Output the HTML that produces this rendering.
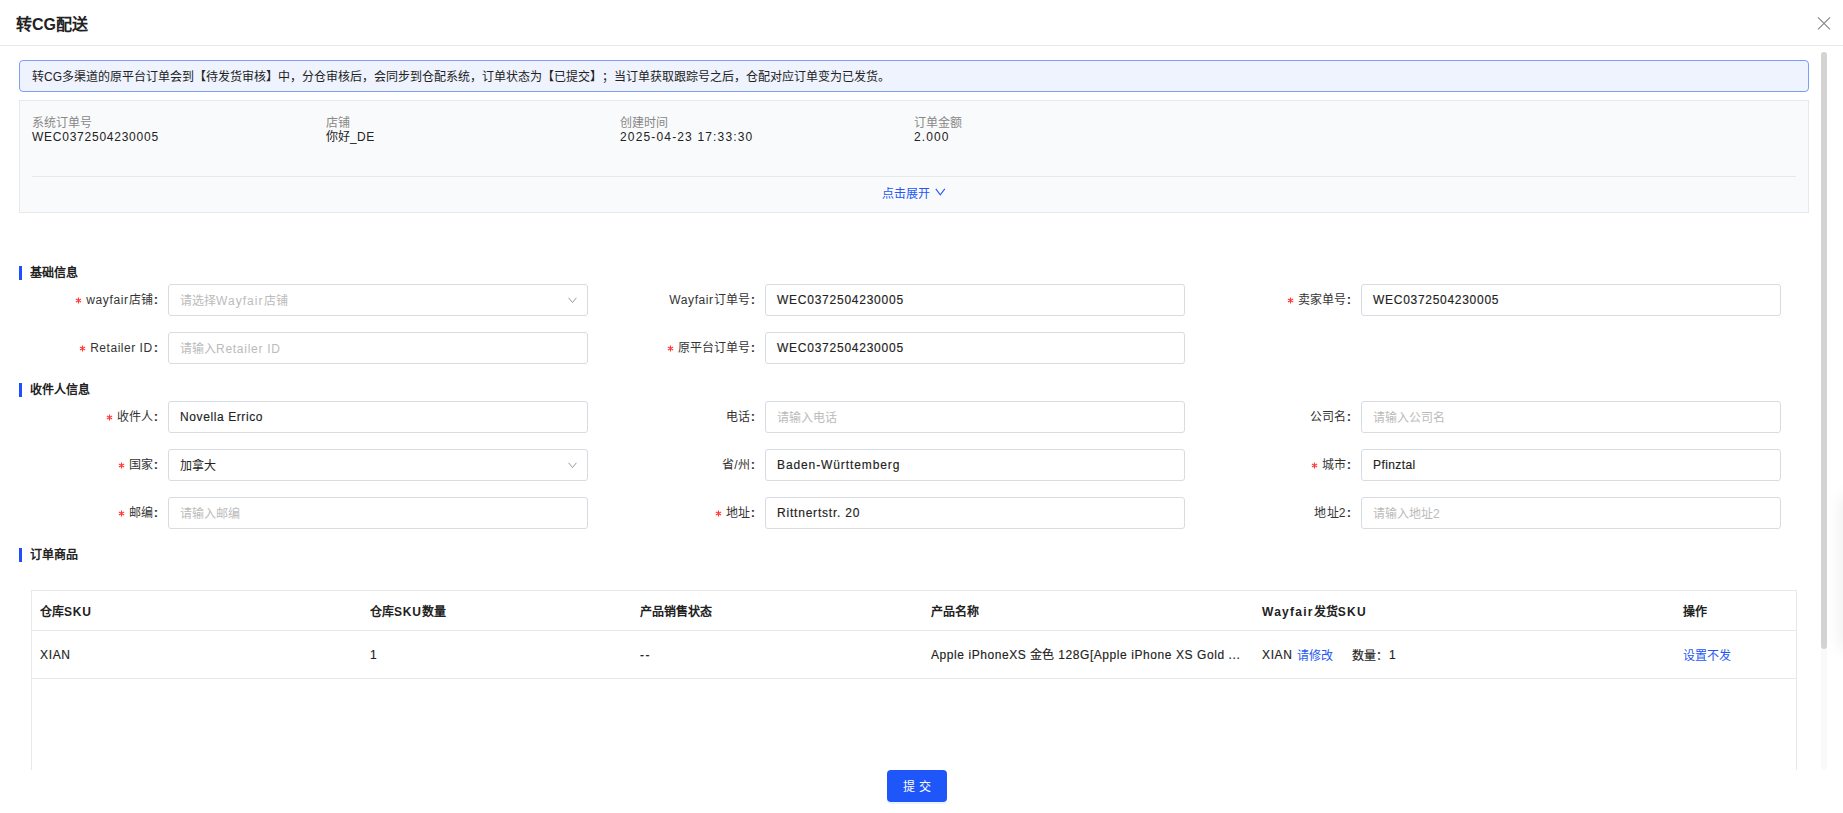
<!DOCTYPE html>
<html lang="zh-CN"><head><meta charset="utf-8">
<style>
*{box-sizing:border-box;margin:0;padding:0}
html,body{width:1843px;height:813px;overflow:hidden;background:#fff}
body{text-spacing-trim:space-all;font-feature-settings:normal;font-family:"Liberation Sans",sans-serif;font-size:12px;color:#222;position:relative}
.a{position:absolute;white-space:nowrap}
.title{left:16px;top:14px;font-size:16px;font-weight:bold;color:#222;line-height:22px}
.hdr-line{left:0;top:45px;width:1843px;height:1px;background:#e8e8e8}
.close{left:1817px;top:16px;width:14px;height:14px}
.alert{left:19px;top:60px;width:1790px;height:32px;border:1px solid #7b9ef7;background:#eef3fe;border-radius:4px;padding-left:12px;line-height:32px;color:#222}
.info{left:19px;top:100px;width:1790px;height:113px;border:1px solid #e6e8eb;background:#f9fafb}
.lbl{color:#888;line-height:14px}
.val{color:#222;line-height:14px}
.divl{left:32px;top:176px;width:1764px;height:1px;background:#e6e8eb}
.expand{left:882px;top:187px;color:#2457f5;line-height:14px}
.exchev{position:absolute;left:53px;top:0.5px}
.sec{font-weight:bold;color:#222;line-height:14px}
.bar{width:3px;height:14px;background:#1e50ff}
.flabel{line-height:14px;color:#333;text-align:right}
.req{display:inline-block;vertical-align:0px;margin-right:4px}
.inp{width:420px;height:32px;border:1px solid #d7dbe2;border-radius:3px;background:#fff;padding-left:11px;line-height:30px;color:#222}
.ph{color:#bbb;line-height:32px}
.cj{position:relative;top:1px}
.chev{position:absolute;right:10px;top:12px;width:9px;height:7px}
.tbl{left:31px;top:590px;width:1766px;height:180px;border-left:1px solid #e6e8ec;border-right:1px solid #e6e8ec;border-top:1px solid #e6e8ec}
.th{font-weight:bold;color:#222;line-height:14px}
.td{color:#222;line-height:14px}
.link{color:#2457f5}
.rowline{height:1px;background:#e6e8ec}
.btn{left:887px;top:770px;width:60px;height:32px;background:#1f56fa;border-radius:4px;color:#fff;text-align:center;line-height:35px;letter-spacing:4px;text-indent:4px;box-shadow:0 2px 0 rgba(5,145,255,0.1)}
.sb{left:1821px;top:52px;width:6px;height:597px;background:#d3d3d3;border-radius:3px}
.sbt{left:1821px;top:52px;width:6px;height:718px;background:#f9f9f9;border-radius:3px}
.co{margin-left:1px;font-weight:bold;font-size:13px}
.shd{left:1845px;top:500px;width:10px;height:145px;box-shadow:0 0 16px 4px rgba(0,0,0,0.07)}
span[id^="v"],span[id^="td"]{-webkit-text-stroke:0.15px currentColor}
.ph span{-webkit-text-stroke:0}

</style></head><body>
<div class="a title">转CG配送</div>
<div class="a hdr-line"></div>
<svg class="a close" viewBox="0 0 14 14"><path d="M1 1.4L13 13.4M13 1.4L1 13.4" stroke="#8a8a8a" stroke-width="1.2"/></svg>
<div class="a sbt"></div><div class="a sb"></div><div class="a shd"></div>
<div class="a alert">转CG多渠道的原平台订单会到【待发货审核】中，分仓审核后，会同步到仓配系统，订单状态为【已提交】；当订单获取跟踪号之后，仓配对应订单变为已发货。</div>
<div class="a info"></div>
<div class="a lbl" style="left:32px;top:116px">系统订单号</div>
<div class="a val" style="left:32px;top:130px"><span id="iw1"><span id="iv1" style="letter-spacing:0.753px">WEC0372504230005</span></span></div>
<div class="a lbl" style="left:326px;top:116px">店铺</div>
<div class="a val" style="left:326px;top:130px"><span id="iw2">你好<span id="iv2" style="letter-spacing:0.450px">_DE</span></span></div>
<div class="a lbl" style="left:620px;top:116px">创建时间</div>
<div class="a val" style="left:620px;top:130px"><span id="iw3"><span id="iv3" style="letter-spacing:1.156px">2025-04-23 17:33:30</span></span></div>
<div class="a lbl" style="left:914px;top:116px">订单金额</div>
<div class="a val" style="left:914px;top:130px"><span id="iw4"><span id="iv4" style="letter-spacing:1.075px">2.000</span></span></div>
<div class="a divl"></div>
<div class="a expand">点击展开<svg class="exchev" width="11" height="8" viewBox="0 0 11 8"><path d="M0.8 0.8L5.3 6.8L9.8 0.8" fill="none" stroke="#2457f5" stroke-width="1.1"/></svg></div>
<div class="a bar" style="left:19px;top:266px"></div>
<div class="a sec" style="left:30px;top:266px">基础信息</div>
<div class="a flabel" style="right:1685px;top:293px"><svg class="req" width="7" height="7" viewBox="0 0 7 7"><path d="M3.5 0.4V6.6M0.9 2L6.1 5M0.9 5L6.1 2" stroke="#ff3a3a" stroke-width="1.15"/><circle cx="3.5" cy="3.5" r="0.9" fill="#ff3a3a"/></svg><span id="fl1"><span id="lb1" style="letter-spacing:0.643px">wayfair</span>店铺<span class="co">:</span></span></div>
<div class="a inp ph" style="left:168px;top:284px"><span id="fv1">请选择<span id="ph1" style="letter-spacing:1.043px">Wayfair</span>店铺</span><svg class="chev" width="9" height="7" viewBox="0 0 9 7"><path d="M0.6 0.8L4.5 5.6L8.4 0.8" fill="none" stroke="#999" stroke-width="1"/></svg></div>
<div class="a flabel" style="right:1088px;top:293px"><span id="fl2"><span id="lb2" style="letter-spacing:0.586px">Wayfair</span>订单号<span class="co">:</span></span></div>
<div class="a inp" style="left:765px;top:284px"><span id="fv2"><span id="v2" style="letter-spacing:0.753px">WEC0372504230005</span></span></div>
<div class="a flabel" style="right:492px;top:293px"><svg class="req" width="7" height="7" viewBox="0 0 7 7"><path d="M3.5 0.4V6.6M0.9 2L6.1 5M0.9 5L6.1 2" stroke="#ff3a3a" stroke-width="1.15"/><circle cx="3.5" cy="3.5" r="0.9" fill="#ff3a3a"/></svg><span id="fl3">卖家单号<span class="co">:</span></span></div>
<div class="a inp" style="left:1361px;top:284px"><span id="fv3"><span id="v3" style="letter-spacing:0.713px">WEC0372504230005</span></span></div>
<div class="a flabel" style="right:1685px;top:341px"><svg class="req" width="7" height="7" viewBox="0 0 7 7"><path d="M3.5 0.4V6.6M0.9 2L6.1 5M0.9 5L6.1 2" stroke="#ff3a3a" stroke-width="1.15"/><circle cx="3.5" cy="3.5" r="0.9" fill="#ff3a3a"/></svg><span id="fl4"><span id="lb4" style="letter-spacing:0.527px">Retailer ID</span><span class="co">:</span></span></div>
<div class="a inp ph" style="left:168px;top:332px"><span id="fv4">请输入<span id="ph4" style="letter-spacing:0.730px">Retailer ID</span></span></div>
<div class="a flabel" style="right:1088px;top:341px"><svg class="req" width="7" height="7" viewBox="0 0 7 7"><path d="M3.5 0.4V6.6M0.9 2L6.1 5M0.9 5L6.1 2" stroke="#ff3a3a" stroke-width="1.15"/><circle cx="3.5" cy="3.5" r="0.9" fill="#ff3a3a"/></svg><span id="fl5">原平台订单号<span class="co">:</span></span></div>
<div class="a inp" style="left:765px;top:332px"><span id="fv5"><span id="v5" style="letter-spacing:0.753px">WEC0372504230005</span></span></div>
<div class="a bar" style="left:19px;top:383px"></div>
<div class="a sec" style="left:30px;top:383px">收件人信息</div>
<div class="a flabel" style="right:1685px;top:410px"><svg class="req" width="7" height="7" viewBox="0 0 7 7"><path d="M3.5 0.4V6.6M0.9 2L6.1 5M0.9 5L6.1 2" stroke="#ff3a3a" stroke-width="1.15"/><circle cx="3.5" cy="3.5" r="0.9" fill="#ff3a3a"/></svg><span id="fl6">收件人<span class="co">:</span></span></div>
<div class="a inp" style="left:168px;top:401px"><span id="fv6"><span id="v6" style="letter-spacing:0.600px">Novella Errico</span></span></div>
<div class="a flabel" style="right:1088px;top:410px"><span >电话<span class="co">:</span></span></div>
<div class="a inp ph" style="left:765px;top:401px"><span >请输入电话</span></div>
<div class="a flabel" style="right:492px;top:410px"><span >公司名<span class="co">:</span></span></div>
<div class="a inp ph" style="left:1361px;top:401px"><span >请输入公司名</span></div>
<div class="a flabel" style="right:1685px;top:458px"><svg class="req" width="7" height="7" viewBox="0 0 7 7"><path d="M3.5 0.4V6.6M0.9 2L6.1 5M0.9 5L6.1 2" stroke="#ff3a3a" stroke-width="1.15"/><circle cx="3.5" cy="3.5" r="0.9" fill="#ff3a3a"/></svg><span id="fl9">国家<span class="co">:</span></span></div>
<div class="a inp" style="left:168px;top:449px"><span ><span class="cj">加拿大</span></span><svg class="chev" width="9" height="7" viewBox="0 0 9 7"><path d="M0.6 0.8L4.5 5.6L8.4 0.8" fill="none" stroke="#999" stroke-width="1"/></svg></div>
<div class="a flabel" style="right:1088px;top:458px"><span id="fl10">省/州<span class="co">:</span></span></div>
<div class="a inp" style="left:765px;top:449px"><span id="fv10"><span id="v10" style="letter-spacing:0.894px">Baden-Württemberg</span></span></div>
<div class="a flabel" style="right:492px;top:458px"><svg class="req" width="7" height="7" viewBox="0 0 7 7"><path d="M3.5 0.4V6.6M0.9 2L6.1 5M0.9 5L6.1 2" stroke="#ff3a3a" stroke-width="1.15"/><circle cx="3.5" cy="3.5" r="0.9" fill="#ff3a3a"/></svg><span >城市<span class="co">:</span></span></div>
<div class="a inp" style="left:1361px;top:449px"><span id="fv11"><span id="v11" style="letter-spacing:0.414px">Pfinztal</span></span></div>
<div class="a flabel" style="right:1685px;top:506px"><svg class="req" width="7" height="7" viewBox="0 0 7 7"><path d="M3.5 0.4V6.6M0.9 2L6.1 5M0.9 5L6.1 2" stroke="#ff3a3a" stroke-width="1.15"/><circle cx="3.5" cy="3.5" r="0.9" fill="#ff3a3a"/></svg><span >邮编<span class="co">:</span></span></div>
<div class="a inp ph" style="left:168px;top:497px"><span >请输入邮编</span></div>
<div class="a flabel" style="right:1088px;top:506px"><svg class="req" width="7" height="7" viewBox="0 0 7 7"><path d="M3.5 0.4V6.6M0.9 2L6.1 5M0.9 5L6.1 2" stroke="#ff3a3a" stroke-width="1.15"/><circle cx="3.5" cy="3.5" r="0.9" fill="#ff3a3a"/></svg><span >地址<span class="co">:</span></span></div>
<div class="a inp" style="left:765px;top:497px"><span id="fv13"><span id="v13" style="letter-spacing:0.793px">Rittnertstr. 20</span></span></div>
<div class="a flabel" style="right:492px;top:506px"><span id="fl14"><span id="lb14" style="letter-spacing:0.200px">地址2</span><span class="co">:</span></span></div>
<div class="a inp ph" style="left:1361px;top:497px"><span >请输入地址<span id="ph14" style="letter-spacing:0.000px">2</span></span></div>
<div class="a bar" style="left:19px;top:548px"></div>
<div class="a sec" style="left:30px;top:548px">订单商品</div>
<div class="a tbl"></div>
<div class="a rowline" style="left:32px;top:630px;width:1764px"></div>
<div class="a rowline" style="left:32px;top:678px;width:1764px"></div>
<div class="a th" style="left:40px;top:605px"><span id="tw1">仓库<span id="th1" style="letter-spacing:0.800px">SKU</span></span></div>
<div class="a th" style="left:370px;top:605px"><span id="tw2">仓库<span id="th2" style="letter-spacing:0.833px">SKU</span>数量</span></div>
<div class="a th" style="left:640px;top:605px"><span >产品销售状态</span></div>
<div class="a th" style="left:931px;top:605px"><span >产品名称</span></div>
<div class="a th" style="left:1262px;top:605px"><span id="tw5"><span id="th5a" style="letter-spacing:1.256px">Wayfair</span>发货<span id="th5b" style="letter-spacing:1.256px">SKU</span></span></div>
<div class="a th" style="left:1683px;top:605px"><span >操作</span></div>
<div class="a td" style="left:40px;top:648px"><span id="tdw1"><span id="td1" style="letter-spacing:0.667px">XIAN</span></span></div>
<div class="a td" style="left:370px;top:648px"><span ><span id="td2" style="letter-spacing:0.000px">1</span></span></div>
<div class="a td" style="left:640px;top:648px"><span id="tdw3"><span id="td3" style="letter-spacing:1.400px">--</span></span></div>
<div class="a td" style="left:931px;top:648px"><span id="tdw4"><span id="td4a" style="letter-spacing:0.573px">Apple iPhoneXS </span>金色<span id="td4b" style="letter-spacing:0.573px"> 128G[Apple iPhone XS Gold ...</span></span></div>
<div class="a td" style="left:1262px;top:648px"><span id="tdw5"><span id="td5" style="letter-spacing:0.633px">XIAN</span></span></div>
<div class="a td link" style="left:1297px;top:649px">请修改</div>
<div class="a td" style="left:1352px;top:648px"><span id="tdw6"><span class="cj" style="margin-right:1px">数量：</span><span id="td6" style="letter-spacing:0.000px">1</span></span></div>
<div class="a td link" style="left:1683px;top:649px">设置不发</div>
<div class="a btn">提交</div>
</body></html>
